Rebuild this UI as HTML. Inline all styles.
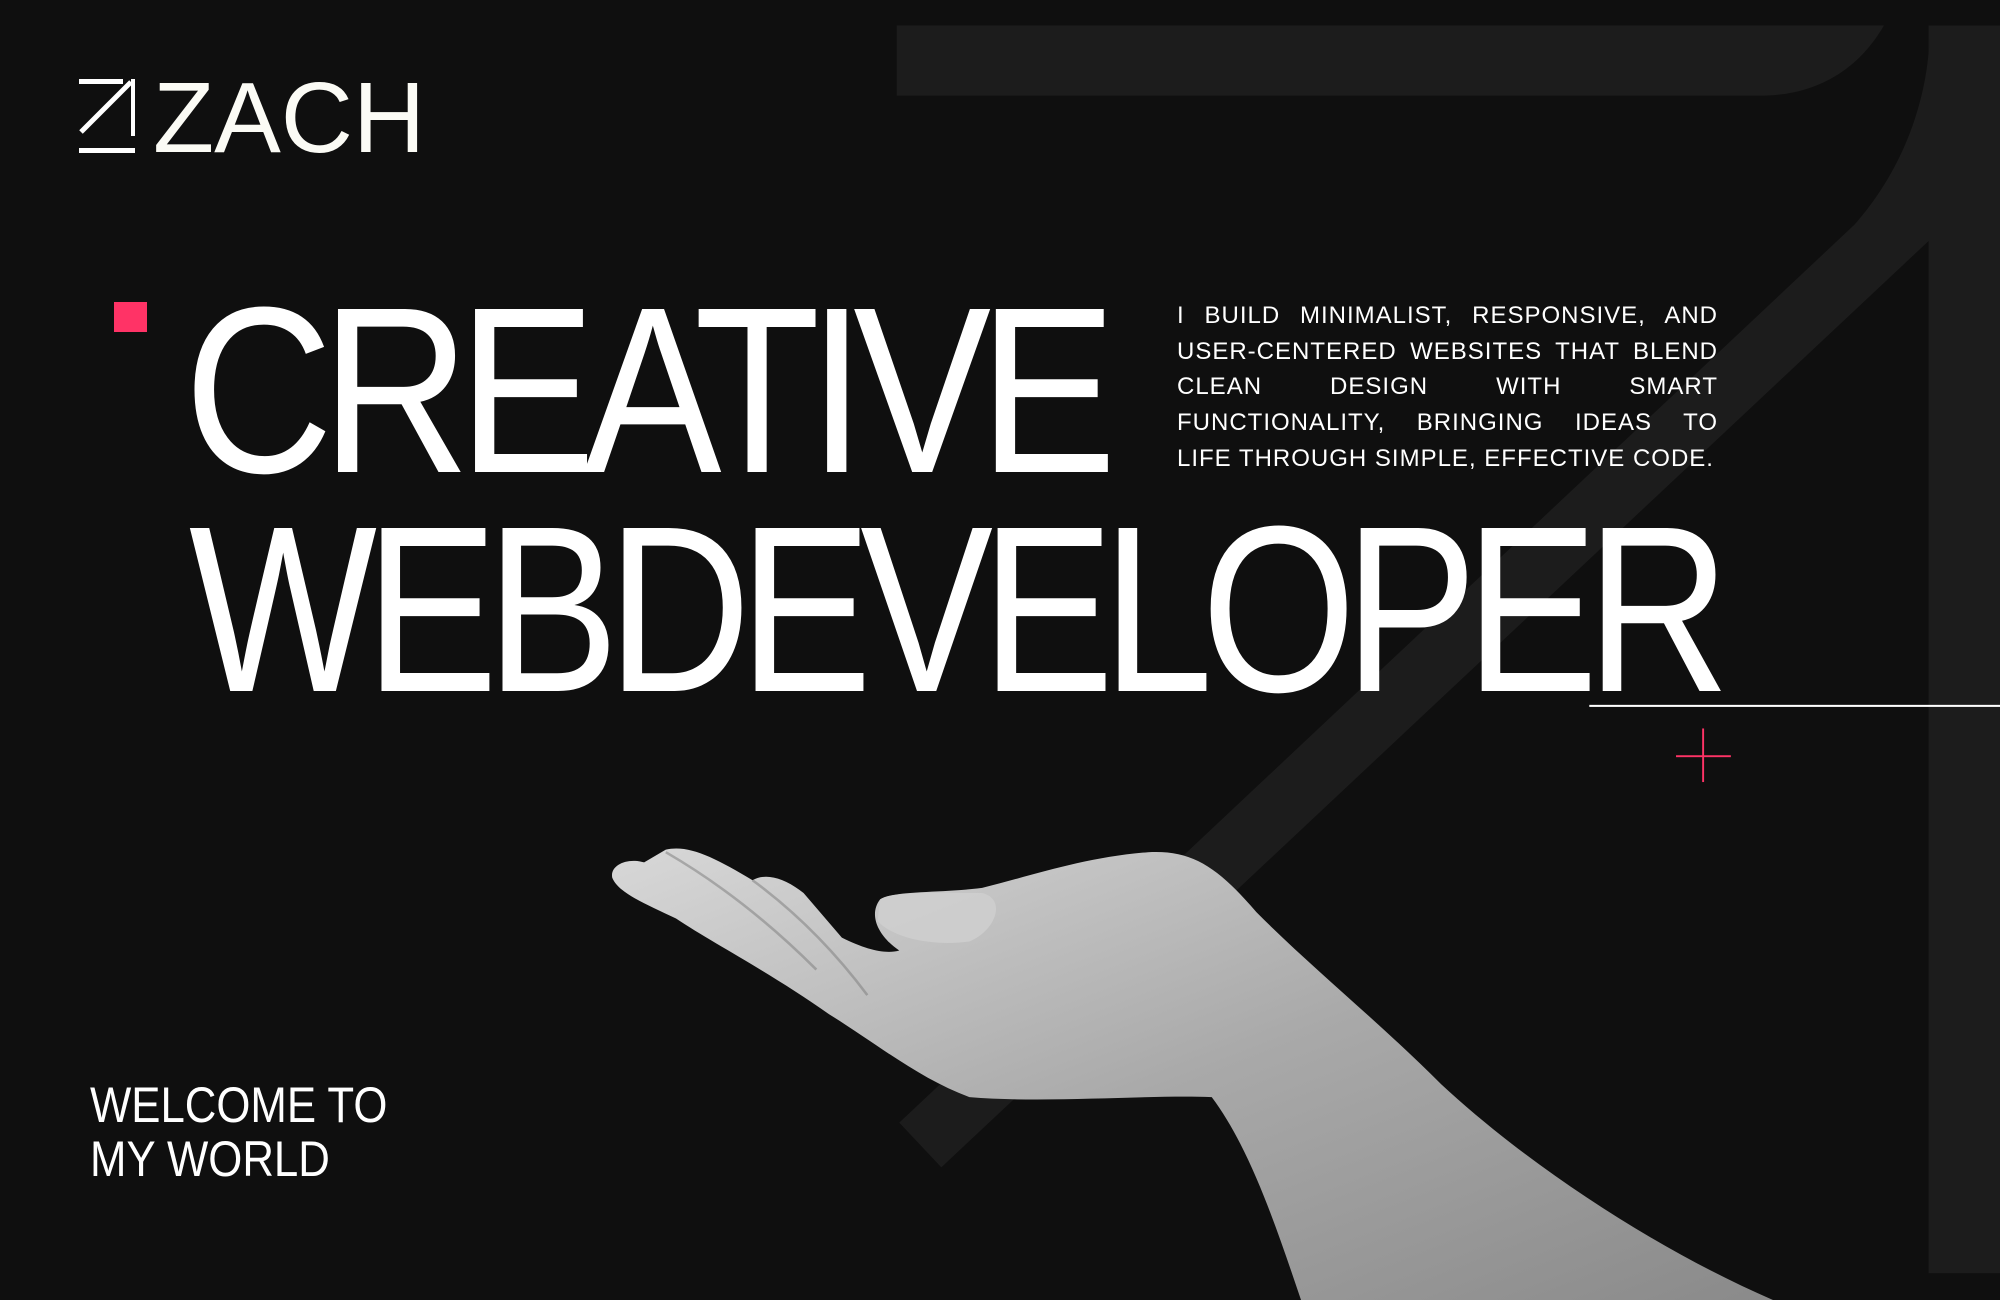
<!DOCTYPE html>
<html><head><meta charset="utf-8"><style>
html,body{margin:0;padding:0;background:#0f0f0f;}
body{width:2000px;height:1300px;position:relative;overflow:hidden;font-family:"Liberation Sans",sans-serif;color:#fff;}
svg.bg{position:absolute;left:0;top:0;width:2000px;height:1300px;}
.big{position:absolute;font-size:237px;line-height:1;transform-origin:left top;letter-spacing:-14px;white-space:nowrap;color:#fff;}
.para{position:absolute;left:1177px;top:298px;width:541px;font-size:24px;line-height:35.7px;letter-spacing:1px;}
.para div{text-align:justify;text-align-last:justify;white-space:nowrap;}
.para div.l{text-align-last:left;}
.welcome{position:absolute;left:90px;top:1078px;font-size:50px;line-height:54px;transform-origin:left top;transform:scaleX(.875);white-space:nowrap;}
.logo{position:absolute;left:153px;top:68px;font-size:100px;line-height:1;color:#fbfbf5;}
</style></head><body>
<svg class="bg" viewBox="0 0 1568 1019" preserveAspectRatio="none">
<defs>
<linearGradient id="hg" x1="0" y1="0" x2="1" y2="1">
<stop offset="0" stop-color="#d8d8d8"/><stop offset="0.5" stop-color="#a9a9a9"/><stop offset="1" stop-color="#8a8a8a"/>
</linearGradient>
</defs>
<g fill="#1c1c1c">
<path d="M703,20 H1477 C1455,58 1420,75 1380,75 H703 Z"/>
<rect x="1512" y="20" width="56" height="978"/>
<path d="M1513,20 C1513,80 1490,135 1454,176 L705,880 L738,915 L1513,188 Z"/>
</g>
<path fill="url(#hg)" d="M480,688 C478,678 492,672 505,676 L522,666 C540,662 560,672 590,690 C600,684 615,688 630,700 L660,735 C680,745 695,748 705,745 C690,735 680,718 690,705 C700,698 740,700 770,696 C810,686 850,672 900,668 C935,666 955,680 985,715 C1030,760 1080,800 1130,850 C1200,915 1300,980 1390,1019 L1020,1019 C1000,960 980,900 950,860 C900,858 820,865 760,860 C720,845 690,820 650,795 C600,760 560,740 530,720 C505,708 485,700 480,688 Z"/>
<path fill="#cfcfcf" d="M690,705 C700,698 740,700 770,700 C790,705 780,730 760,738 C730,742 700,735 688,722 Z" opacity=".8"/>
<path fill="none" stroke="#7a7a7a" stroke-width="2" d="M522,668 C560,690 600,720 640,760 M590,690 C620,712 650,740 680,780" opacity=".5"/>
<rect x="1246" y="552.5" width="322" height="1.6" fill="#fff"/>
<rect x="1314" y="592" width="43" height="1.5" fill="#ff3366"/>
<rect x="1334.5" y="571" width="1.5" height="42" fill="#ff3366"/>
</svg>
<svg style="position:absolute;left:0;top:0" width="200" height="200">
<g fill="#fff">
<rect x="79" y="79" width="44" height="5"/>
<rect x="131" y="79" width="4" height="57"/>
<rect x="79" y="148" width="56" height="5"/>
</g>
<line x1="81" y1="132" x2="131" y2="82" stroke="#fff" stroke-width="5"/>
</svg>
<div class="logo">ZACH</div>
<div style="position:absolute;left:114px;top:302px;width:33px;height:30px;background:#ff3366"></div>
<div class="big" style="left:184px;top:272px;transform:scaleX(.872)">CREATIVE</div>
<div class="big" style="left:189px;top:491px;transform:scaleX(.84)">WEBDEVELOPER</div>
<div class="para">
<div>I BUILD MINIMALIST, RESPONSIVE, AND</div>
<div>USER-CENTERED WEBSITES THAT BLEND</div>
<div>CLEAN DESIGN WITH SMART</div>
<div>FUNCTIONALITY, BRINGING IDEAS TO</div>
<div class="l">LIFE THROUGH SIMPLE, EFFECTIVE CODE.</div>
</div>
<div class="welcome">WELCOME TO<br>MY WORLD</div>
</body></html>
